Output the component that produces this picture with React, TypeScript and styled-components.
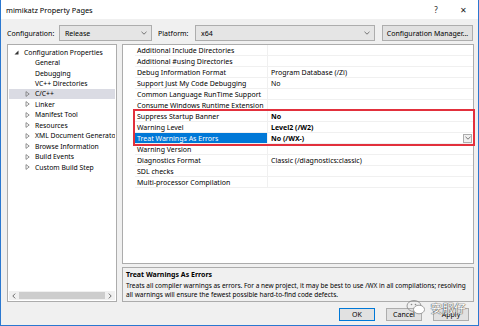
import React from 'react';
import styled, { createGlobalStyle } from 'styled-components';

const FONT = `"Noto Sans", "Open Sans", "Liberation Sans", sans-serif`;

const Global = createGlobalStyle`
  html, body { margin: 0; padding: 0; background: #ffffff; }
  body { font-family: ${FONT}; }
  * { box-sizing: border-box; }
`;

const Window = styled.div`
  position: relative;
  width: 479px;
  height: 326px;
  border: 1px solid #2b78d0;
  border-top: none;
  display: flex;
  flex-direction: column;
  background: #f0f0f0;
  font-family: ${FONT};
  font-size: 7px;
  color: #000;
  overflow: hidden;
`;

const TitleBar = styled.div`
  height: 19px;
  flex: none;
  background: #ffffff;
  display: flex;
  align-items: center;
  padding-left: 5px;
  font-size: 7.4px;
`;

const TitleText = styled.div`
  flex: 1;
`;

const TitleBtn = styled.div<{ $w: number }>`
  width: ${(p) => p.$w}px;
  height: 19px;
  display: flex;
  align-items: center;
  justify-content: center;
  font-size: 8px;
  color: #222;
`;

const Body = styled.div`
  flex: 1;
  min-height: 0;
  display: flex;
  flex-direction: column;
  padding: 6px 4px 0 6px;
`;

const ConfigRow = styled.div`
  height: 16px;
  display: flex;
  align-items: center;
`;

const Label = styled.div<{ $w: number }>`
  width: ${(p) => p.$w}px;
  flex: none;
`;

const Combo = styled.div<{ $w: number }>`
  width: ${(p) => p.$w}px;
  height: 16px;
  flex: none;
  border: 1px solid #adadad;
  background: #e5e5e5;
  display: flex;
  align-items: center;
  padding-left: 5px;
  padding-right: 4px;
`;

const ComboText = styled.div`
  flex: 1;
`;

const Gap = styled.div<{ $w: number }>`
  width: ${(p) => p.$w}px;
  flex: none;
`;

const PushButton = styled.div<{ $w: number; $h: number; $default?: boolean }>`
  width: ${(p) => p.$w}px;
  height: ${(p) => p.$h}px;
  flex: none;
  border: 1px solid ${(p) => (p.$default ? '#0078d7' : '#adadad')};
  background: #e1e1e1;
  display: flex;
  align-items: center;
  justify-content: center;
  white-space: nowrap;
`;

const Main = styled.div`
  margin-top: 3px;
  height: 258px;
  display: flex;
  gap: 5px;
`;

const TreePanel = styled.div`
  width: 110px;
  flex: none;
  background: #ffffff;
  border: 1px solid #acacac;
  display: flex;
  flex-direction: column;
  padding: 1px;
`;

const TreeList = styled.div`
  flex: 1;
  padding-top: 1px;
  overflow: hidden;
`;

const TreeRow = styled.div<{ $level: number; $selected?: boolean }>`
  height: 10.45px;
  display: flex;
  align-items: center;
  padding-left: ${(p) => 4 + p.$level * 11}px;
  background: ${(p) => (p.$selected ? '#dadbe3' : 'transparent')};
  white-space: nowrap;
  font-size: 6.8px;
`;

const Arrow = styled.div`
  width: 7px;
  height: 7px;
  margin-right: 4px;
  flex: none;
  display: flex;
  align-items: center;
  justify-content: center;
`;

const HScroll = styled.div`
  height: 9px;
  flex: none;
  background: #f0f0f0;
  display: flex;
  align-items: center;
`;

const ScrollArrow = styled.div`
  width: 10px;
  height: 9px;
  display: flex;
  align-items: center;
  justify-content: center;
  flex: none;
`;

const Thumb = styled.div`
  flex: 1;
  height: 7px;
  background: #cdcdcd;
`;

const RightCol = styled.div`
  flex: 1;
  min-width: 0;
  display: flex;
  flex-direction: column;
  gap: 3px;
`;

const Grid = styled.div`
  flex: 1;
  min-height: 0;
  background: #ffffff;
  border: 1px solid #acacac;
  padding-left: 12px;
`;

const Group = styled.div`
  outline: 2px solid #e2303c;
  outline-offset: 0px;
  position: relative;
`;

const PropRow = styled.div`
  height: 11px;
  display: flex;
  border-bottom: 1px solid #f0f0f0;
  white-space: nowrap;
`;

const NameCell = styled.div<{ $selected?: boolean }>`
  width: 133px;
  flex: none;
  padding-left: 2px;
  display: flex;
  align-items: center;
  border-right: 1px solid #f0f0f0;
  background: ${(p) => (p.$selected ? '#0078d7' : 'transparent')};
  color: ${(p) => (p.$selected ? '#ffffff' : '#000')};
  overflow: hidden;
`;

const ValueCell = styled.div<{ $bold?: boolean }>`
  flex: 1;
  min-width: 0;
  display: flex;
  align-items: center;
  padding-left: 3px;
  font-weight: ${(p) => (p.$bold ? 700 : 400)};
  overflow: hidden;
`;

const ValueText = styled.div`
  flex: 1;
`;

const DropBtn = styled.div`
  width: 9px;
  height: 9px;
  flex: none;
  margin-right: 1px;
  border: 1px solid #acacac;
  background: #f0f0f0;
  display: flex;
  align-items: center;
  justify-content: center;
`;

const Desc = styled.div`
  height: 35px;
  flex: none;
  border: 1px solid #acacac;
  background: #f0f0f0;
  padding: 2px 3px 0 3px;
  display: flex;
  flex-direction: column;
  white-space: nowrap;
  overflow: hidden;
`;

const DescTitle = styled.div`
  font-weight: 700;
  height: 10px;
  line-height: 10px;
`;

const DescLine = styled.div`
  height: 9px;
  line-height: 9px;
  margin-top: 0.5px;
  font-size: 6.5px;
`;

const ButtonRow = styled.div`
  margin-top: 6px;
  display: flex;
  justify-content: flex-end;
  gap: 11px;
  padding-right: 5px;
`;

const Watermark = styled.div`
  position: absolute;
  right: 12px;
  bottom: 9px;
  display: flex;
  align-items: center;
  gap: 5px;
  pointer-events: none;
`;

const WmText = styled.div`
  font-family: "Noto Sans CJK SC", sans-serif;
  font-size: 11.5px;
  line-height: 14px;
  color: #ffffff;
  letter-spacing: 0.3px;
  text-shadow: 0 0 1px #555, 0 0 1px #555, 0 0 1px #555;
`;

const Chevron = () => (
  <svg width="6" height="4" viewBox="0 0 6 4">
    <path d="M0.5 0.8 L3 3.2 L5.5 0.8" fill="none" stroke="#555" strokeWidth="0.8" />
  </svg>
);

const Expanded = () => (
  <svg width="5" height="5" viewBox="0 0 5 5">
    <path d="M4.5 0.5 L4.5 4.5 L0.5 4.5 Z" fill="#333" />
  </svg>
);

const Collapsed = () => (
  <svg width="5" height="6" viewBox="0 0 5 6">
    <path d="M1 0.6 L4.2 3 L1 5.4 Z" fill="none" stroke="#777" strokeWidth="0.8" />
  </svg>
);

const treeItems: { label: string; level: number; arrow?: 'open' | 'closed'; selected?: boolean }[] = [
  { label: 'Configuration Properties', level: 0, arrow: 'open' },
  { label: 'General', level: 1 },
  { label: 'Debugging', level: 1 },
  { label: 'VC++ Directories', level: 1 },
  { label: 'C/C++', level: 1, arrow: 'closed', selected: true },
  { label: 'Linker', level: 1, arrow: 'closed' },
  { label: 'Manifest Tool', level: 1, arrow: 'closed' },
  { label: 'Resources', level: 1, arrow: 'closed' },
  { label: 'XML Document Generator', level: 1, arrow: 'closed' },
  { label: 'Browse Information', level: 1, arrow: 'closed' },
  { label: 'Build Events', level: 1, arrow: 'closed' },
  { label: 'Custom Build Step', level: 1, arrow: 'closed' },
];

type Prop = { name: string; value?: string; bold?: boolean; selected?: boolean };

const propsBefore: Prop[] = [
  { name: 'Additional Include Directories' },
  { name: 'Additional #using Directories' },
  { name: 'Debug Information Format', value: 'Program Database (/Zi)' },
  { name: 'Support Just My Code Debugging', value: 'No' },
  { name: 'Common Language RunTime Support' },
  { name: 'Consume Windows Runtime Extension' },
];

const propsGroup: Prop[] = [
  { name: 'Suppress Startup Banner', value: 'No', bold: true },
  { name: 'Warning Level', value: 'Level2 (/W2)', bold: true },
  { name: 'Treat Warnings As Errors', value: 'No (/WX-)', bold: true, selected: true },
];

const propsAfter: Prop[] = [
  { name: 'Warning Version' },
  { name: 'Diagnostics Format', value: 'Classic (/diagnostics:classic)' },
  { name: 'SDL checks' },
  { name: 'Multi-processor Compilation' },
];

const Row = ({ p }: { p: Prop }) => (
  <PropRow>
    <NameCell $selected={p.selected}>{p.name}</NameCell>
    <ValueCell $bold={p.bold}>
      <ValueText>{p.value ?? ''}</ValueText>
      {p.selected && (
        <DropBtn>
          <Chevron />
        </DropBtn>
      )}
    </ValueCell>
  </PropRow>
);

export default function App() {
  return (
    <>
      <Global />
      <Window>
        <TitleBar>
          <TitleText>mimikatz Property Pages</TitleText>
          <TitleBtn $w={24}>?</TitleBtn>
          <TitleBtn $w={30}>✕</TitleBtn>
        </TitleBar>
        <Body>
          <ConfigRow>
            <Label $w={52}>Configuration:</Label>
            <Combo $w={93}>
              <ComboText>Release</ComboText>
              <Chevron />
            </Combo>
            <Gap $w={6} />
            <Label $w={37}>Platform:</Label>
            <Combo $w={180}>
              <ComboText>x64</ComboText>
              <Chevron />
            </Combo>
            <Gap $w={7} />
            <PushButton $w={91} $h={16}>Configuration Manager...</PushButton>
          </ConfigRow>
          <Main>
            <TreePanel>
              <TreeList>
                {treeItems.map((t) => (
                  <TreeRow key={t.label} $level={t.level} $selected={t.selected}>
                    <Arrow>
                      {t.arrow === 'open' && <Expanded />}
                      {t.arrow === 'closed' && <Collapsed />}
                    </Arrow>
                    {t.label}
                  </TreeRow>
                ))}
              </TreeList>
              <HScroll>
                <ScrollArrow>
                  <svg width="4" height="6" viewBox="0 0 4 6">
                    <path d="M3.2 0.6 L0.8 3 L3.2 5.4" fill="none" stroke="#606060" strokeWidth="0.9" />
                  </svg>
                </ScrollArrow>
                <Thumb />
                <ScrollArrow>
                  <svg width="4" height="6" viewBox="0 0 4 6">
                    <path d="M0.8 0.6 L3.2 3 L0.8 5.4" fill="none" stroke="#606060" strokeWidth="0.9" />
                  </svg>
                </ScrollArrow>
              </HScroll>
            </TreePanel>
            <RightCol>
              <Grid>
                {propsBefore.map((p) => (
                  <Row key={p.name} p={p} />
                ))}
                <Group>
                  {propsGroup.map((p) => (
                    <Row key={p.name} p={p} />
                  ))}
                </Group>
                {propsAfter.map((p) => (
                  <Row key={p.name} p={p} />
                ))}
              </Grid>
              <Desc>
                <DescTitle>Treat Warnings As Errors</DescTitle>
                <DescLine>
                  Treats all compiler warnings as errors. For a new project, it may be best to use /WX in all compilations; resolving
                </DescLine>
                <DescLine>all warnings will ensure the fewest possible hard-to-find code defects.</DescLine>
              </Desc>
            </RightCol>
          </Main>
          <ButtonRow>
            <PushButton $w={36} $h={13} $default>
              OK
            </PushButton>
            <PushButton $w={36} $h={13}>
              Cancel
            </PushButton>
            <PushButton $w={36} $h={13}>
              Apply
            </PushButton>
          </ButtonRow>
        </Body>
        <Watermark>
          <svg width="20" height="17" viewBox="0 0 20 17">
            <ellipse cx="8" cy="7" rx="7" ry="5.5" fill="none" stroke="#888" strokeWidth="0.8" />
            <ellipse cx="13" cy="10.5" rx="5.5" ry="4.3" fill="#fff" stroke="#888" strokeWidth="0.8" />
            <circle cx="5.5" cy="5.5" r="0.8" fill="#888" />
            <circle cx="9.5" cy="5.5" r="0.8" fill="#888" />
          </svg>
          <WmText>安服仔</WmText>
        </Watermark>
      </Window>
    </>
  );
}
